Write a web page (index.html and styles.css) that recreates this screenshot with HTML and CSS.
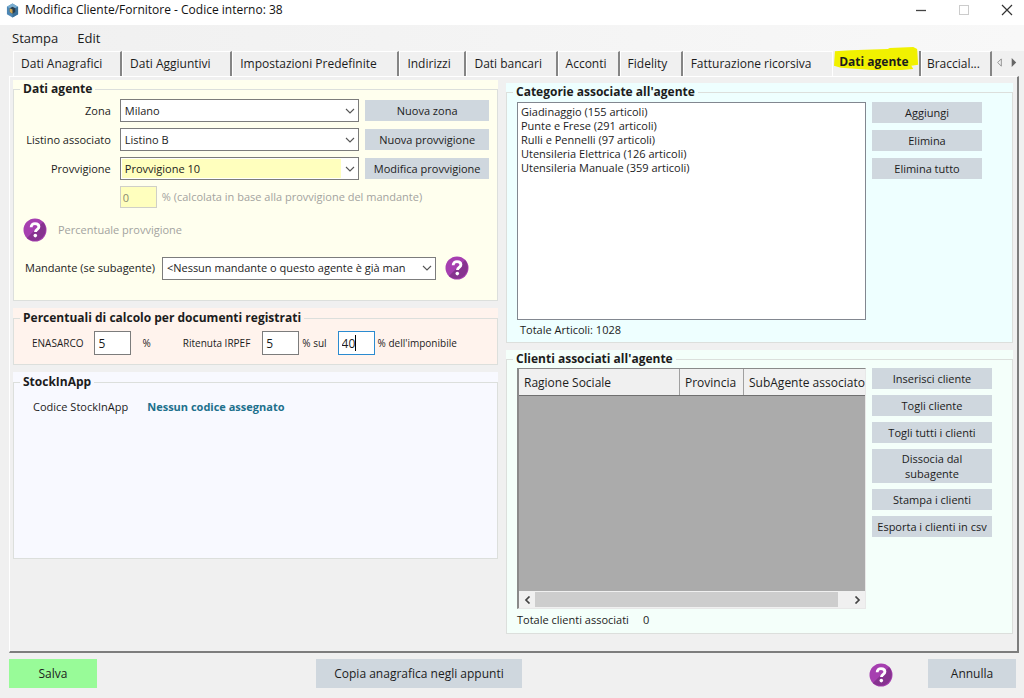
FILE: index.html
```html
<!DOCTYPE html>
<html lang="it">
<head>
<meta charset="utf-8">
<title>Modifica Cliente/Fornitore - Codice interno: 38</title>
<link rel="stylesheet" href="styles.css">
</head>
<body>
<svg class="defs" aria-hidden="true">
  <symbol id="help" viewBox="0 0 24 24">
    <circle cx="12" cy="12" r="11.5" fill="#a63fb0"/>
    <path d="M20.1 3.9A11.5 11.5 0 0 1 3.9 20.1z" fill="#86338f"/>
    <path d="M8.2 9.2C8.2 6.8 9.8 5.6 12 5.6s3.9 1.2 3.9 3.2c0 2.6-3.4 2.6-3.4 5.2" fill="none" stroke="#fff" stroke-width="2.9"/>
    <circle cx="12.3" cy="17.6" r="1.8" fill="#fff"/>
  </symbol>
  <symbol id="chevron" viewBox="0 0 10 6">
    <path d="M1 1l4 4 4-4" fill="none" stroke="#555" stroke-width="1.1"/>
  </symbol>
</svg>

<header class="titlebar">
  <svg class="app-icon" viewBox="0 0 14 16" aria-hidden="true">
    <path d="M7 0.5L13 4v8l-6 3.5L1 12V4z" fill="#4d87b5"/>
    <path d="M7 0.5L13 4 7 7 1 4z" fill="#79add0"/>
    <path d="M7 7l6-3v8l-6 3.5z" fill="#3a7099"/>
    <path d="M4 5.5l3-1.5 3 1.5v4L7 11.5 4 9.5z" fill="#283e50"/>
    <path d="M4 5.5l3 1.5v4.5L4 9.5z" fill="#d3a852"/>
  </svg>
  <h1 class="title">Modifica Cliente/Fornitore - Codice interno: 38</h1>
  <div class="window-buttons">
    <button class="window-button" aria-label="Riduci a icona"><svg viewBox="0 0 12 12"><path d="M1 6.500h10" stroke="#444" stroke-width="1.300"/></svg></button>
    <button class="window-button" aria-label="Ingrandisci" disabled><svg viewBox="0 0 12 12"><rect x="1.500" y="1.500" width="9" height="9" fill="none" stroke="#ccc"/></svg></button>
    <button class="window-button" aria-label="Chiudi"><svg viewBox="0 0 12 12"><path d="M1 1l10 10M11 1L1 11" stroke="#333" stroke-width="1.200"/></svg></button>
  </div>
</header>

<nav class="menubar">
  <button class="menu-item">Stampa</button>
  <button class="menu-item">Edit</button>
</nav>

<div class="tabs" role="tablist">
  <button class="tab" role="tab">Dati Anagrafici</button>
  <button class="tab" role="tab">Dati Aggiuntivi</button>
  <button class="tab" role="tab">Impostazioni Predefinite</button>
  <button class="tab" role="tab">Indirizzi</button>
  <button class="tab" role="tab">Dati bancari</button>
  <button class="tab" role="tab">Acconti</button>
  <button class="tab" role="tab">Fidelity</button>
  <button class="tab tab-before-selected" role="tab">Fatturazione ricorsiva</button>
  <button class="tab tab-selected" role="tab" aria-selected="true">
    <svg class="marker" viewBox="0 0 88 24" preserveAspectRatio="none" aria-hidden="true"><path d="M2 4L18 3 40 2.500 56 2 58 1 82 0 86 2 87 17 80 18 82 21 70 22 40 22 8 20 1 18z" fill="#f1f100"/></svg>
    <span class="tab-label">Dati agente</span>
  </button>
  <button class="tab" role="tab">Braccial...</button>
  <div class="tab-scroll">
    <button class="tab-arrow" aria-label="Schede precedenti"><svg viewBox="0 0 6 10"><path d="M5 1v8L1 5z" fill="#f4f4f4" stroke="#888"/></svg></button>
    <button class="tab-arrow" aria-label="Schede successive"><svg viewBox="0 0 6 10"><path d="M1 0v10l5-5z" fill="#666"/></svg></button>
  </div>
</div>

<main class="page">
  <div class="column column-left">
    <div class="group group-agent">
      <fieldset class="box">
        <legend>Dati agente</legend>
        <div class="agent-grid">
          <label for="zona">Zona</label>
          <span class="combo"><select id="zona"><option>Milano</option></select><svg><use href="#chevron"/></svg></span>
          <button class="button">Nuova zona</button>
          <label for="listino">Listino associato</label>
          <span class="combo"><select id="listino"><option>Listino B</option></select><svg><use href="#chevron"/></svg></span>
          <button class="button">Nuova provvigione</button>
          <label for="provvigione">Provvigione</label>
          <span class="combo combo-yellow"><select id="provvigione"><option>Provvigione 10</option></select><svg><use href="#chevron"/></svg></span>
          <button class="button">Modifica provvigione</button>
          <div class="percent-row">
            <input class="field field-disabled" id="calcolata" value="0" disabled>
            <label for="calcolata">% (calcolata in base alla provvigione del mandante)</label>
          </div>
        </div>
        <div class="help-row">
          <button class="help" aria-label="Aiuto provvigione"><svg><use href="#help"/></svg></button>
          <span>Percentuale provvigione</span>
        </div>
        <div class="mandante-row">
          <label for="mandante">Mandante (se subagente)</label>
          <span class="combo"><select id="mandante"><option>&lt;Nessun mandante o questo agente è già man</option></select><svg><use href="#chevron"/></svg></span>
          <button class="help" aria-label="Aiuto mandante"><svg><use href="#help"/></svg></button>
        </div>
      </fieldset>
    </div>

    <div class="group group-percent">
      <fieldset class="box">
        <legend>Percentuali di calcolo per documenti registrati</legend>
        <div class="tax-row">
          <div class="tax-item">
            <label for="enasarco">ENASARCO</label>
            <input class="field" id="enasarco" value="5">
            <span>%</span>
          </div>
          <div class="tax-item tax-irpef">
            <label for="irpef">Ritenuta IRPEF</label>
            <input class="field" id="irpef" value="5">
            <label class="tax-sul" for="imponibile">% sul</label>
            <span class="caret-field"><input class="field field-active" id="imponibile" value="40"></span>
            <span class="tax-end">% dell'imponibile</span>
          </div>
        </div>
      </fieldset>
    </div>

    <div class="group group-stock">
      <fieldset class="box">
        <legend>StockInApp</legend>
        <div class="stock-row">
          <span>Codice StockInApp</span>
          <strong>Nessun codice assegnato</strong>
        </div>
      </fieldset>
    </div>
  </div>

  <div class="column column-right">
    <div class="group group-categories">
      <fieldset class="box">
        <legend>Categorie associate all'agente</legend>
        <div class="side-layout">
          <div class="list-area">
            <select class="listbox" multiple size="15" aria-label="Categorie associate all'agente">
              <option>Giadinaggio (155 articoli)</option>
              <option>Punte e Frese (291 articoli)</option>
              <option>Rulli e Pennelli (97 articoli)</option>
              <option>Utensileria Elettrica (126 articoli)</option>
              <option>Utensileria Manuale (359 articoli)</option>
            </select>
            <p class="total total-articles">Totale Articoli: 1028</p>
          </div>
          <div class="side-buttons side-buttons-narrow">
            <button class="button">Aggiungi</button>
            <button class="button">Elimina</button>
            <button class="button">Elimina tutto</button>
          </div>
        </div>
      </fieldset>
    </div>

    <div class="group group-clients">
      <fieldset class="box">
        <legend>Clienti associati all'agente</legend>
        <div class="side-layout side-layout-clients">
          <div class="list-area">
            <div class="datagrid">
              <div class="datagrid-view">
                <table class="datagrid-table">
                  <thead><tr><th class="col-name">Ragione Sociale</th><th class="col-province">Provincia</th><th class="col-sub">SubAgente associato</th></tr></thead>
                </table>
              </div>
              <div class="scrollbar">
                <button class="scroll-arrow" aria-label="Scorri a sinistra"><svg viewBox="0 0 6 8"><path d="M5 0.500L1.500 4 5 7.500" fill="none" stroke="#444" stroke-width="1.700"/></svg></button>
                <div class="scroll-track"><div class="scroll-thumb"></div></div>
                <button class="scroll-arrow" aria-label="Scorri a destra"><svg viewBox="0 0 6 8"><path d="M1 0.500L4.500 4 1 7.500" fill="none" stroke="#444" stroke-width="1.700"/></svg></button>
              </div>
            </div>
            <p class="total"><span>Totale clienti associati</span><span>0</span></p>
          </div>
          <div class="side-buttons">
            <button class="button">Inserisci cliente</button>
            <button class="button">Togli cliente</button>
            <button class="button">Togli tutti i clienti</button>
            <button class="button button-tall">Dissocia dal subagente</button>
            <button class="button">Stampa i clienti</button>
            <button class="button">Esporta i clienti in csv</button>
          </div>
        </div>
      </fieldset>
    </div>
  </div>
</main>

<footer class="footer">
  <button class="button button-large button-save">Salva</button>
  <button class="button button-large button-copy">Copia anagrafica negli appunti</button>
  <button class="help" aria-label="Aiuto"><svg><use href="#help"/></svg></button>
  <button class="button button-large">Annulla</button>
</footer>
</body>
</html>
```
FILE: styles.css
```css
* { box-sizing: border-box; }

body {
  margin: 0;
  min-height: 100vh;
  display: flex;
  flex-direction: column;
  background: #f0f0f0;
  color: #1c1c1c;
  font: 11px/14px "Open Sans", "Noto Sans", sans-serif;
}

button, input, select { font: inherit; color: inherit; margin: 0; }
button { border: 0; padding: 0; background: none; }
p { margin: 0; }
.defs { position: absolute; width: 0; height: 0; }

.titlebar { display: flex; align-items: center; height: 25px; padding: 0 5px 5px 6px; background: #fff; }
.app-icon { width: 13px; height: 15px; }
.title { flex: 1; margin: 0 0 0 6px; font-size: 12px; font-weight: 400; color: #111; }
.window-buttons { display: flex; gap: 19px; }
.window-button { display: flex; justify-content: center; width: 24px; }
.window-button svg { width: 12px; height: 12px; }

.menubar {
  display: flex;
  gap: 19px;
  height: 26px;
  padding: 0 12px;
  background: linear-gradient(90deg, #f0f0f0, #f8f8f8);
  font-size: 13px;
}

.tabs {
  display: grid;
  grid-template-columns: 109fr 110fr 167fr 67fr 91fr 62fr 63fr 149fr 89fr 71fr 32px;
  height: 25px;
  padding-left: 13px;
  font-size: 12px;
}
.tab {
  border: 1px solid #fff;
  border-right: 2px solid #858585;
  border-bottom: 0;
  padding-left: 7px;
  text-align: left;
  white-space: nowrap;
}
.tab:nth-child(10) { padding-left: 5px; }
.tab-before-selected { border-right: 0; }
.tab-selected { position: relative; padding: 0 4px 4px 0; text-align: center; font-weight: 700; border-top: 0; }
.marker { position: absolute; left: 0; top: -4px; width: 100%; height: 25px; }
.tab-label { position: relative; }
.tab-scroll { display: flex; gap: 7px; align-items: center; padding: 0 0 3px 4px; }
.tab-arrow { display: flex; }
.tab-arrow svg { width: 7px; height: 9px; }

.page {
  flex: 1;
  display: grid;
  grid-template-columns: 485fr 507fr;
  gap: 8px;
  margin: 0 5px 0 9px;
  padding: 3px 4px 17px 3px;
  border: 1px solid #fff;
  border-right: 2px solid #7d7d7d;
  border-bottom: 2px solid #7d7d7d;
}
.column { display: flex; flex-direction: column; gap: 7px; min-width: 0; }
.column-right { padding-top: 3px; }

.group { display: flex; }
.box { flex: 1; min-width: 0; margin: 0; padding: 0; border: 1px solid #dcdfdc; }
.box legend { margin-left: 6px; padding: 0 3px; font-size: 12px; line-height: 18px; font-weight: 700; color: #1c1c1c; }
.group-percent legend, .group-stock legend { line-height: 20px; }
.group-agent { background: #ffffee; }
.group-percent { background: #fff3ed; }
.group-stock { background: #f8f9ff; min-height: 187px; }
.group-categories { background: #eeffff; }
.group-clients { background: #f4fffa; flex: 1; }

.button { height: 21px; background: #cfd7de; text-align: center; white-space: nowrap; }
.help { width: 24px; height: 24px; display: flex; }
.help svg { width: 24px; height: 24px; }

.combo { display: grid; align-items: center; }
.combo select, .combo svg { grid-area: 1 / 1; }
.combo select {
  appearance: none;
  width: 100%;
  height: 23px;
  padding: 0 20px 0 4px;
  border: 1px solid #7c7c7c;
  border-radius: 0;
  background: #fff;
}
.combo svg { width: 10px; height: 6px; justify-self: end; margin-right: 4px; pointer-events: none; }
.combo-yellow select { background: linear-gradient(90deg, #ffffbe calc(100% - 17px), #fff 0); box-shadow: inset 0 0 0 1px #fff; }

.field { width: 37px; height: 24px; padding: 0 3px; border: 1px solid #7c7c7c; background: #fff; font-size: 12px; }
.field-disabled { height: 22px; padding: 0 2px; border-color: #d0d0c8; background: #ffffbe; color: #8a8a70; font-size: 11px; }
.field-active { border-color: #2b8bd0; }

.agent-grid {
  display: grid;
  grid-template-columns: 100fr 240fr 124fr;
  gap: 6px;
  align-items: center;
  padding: 1px 8px 0 0;
}
.agent-grid > label { text-align: right; padding-right: 3px; }
.percent-row { grid-column: 2 / 4; display: flex; align-items: center; gap: 5px; color: #a3a3a0; white-space: nowrap; }
.help-row { display: flex; align-items: center; gap: 11px; padding: 10px 0 14px 9px; color: #a3a3a0; }
.mandante-row { display: flex; align-items: center; gap: 7px; padding: 0 0 20px 11px; white-space: nowrap; }
.mandante-row .combo { width: 274px; }
.mandante-row .help { margin-left: 2px; }

.tax-row { display: flex; gap: 32px; padding: 3px 0 9px 18px; white-space: nowrap; font-size: 10px; }
.tax-item { display: flex; align-items: center; gap: 11px; }
.tax-irpef { gap: 3px; }
.tax-irpef label:first-child { margin-right: 9px; }
.tax-sul { margin-right: 8px; }
.caret-field { position: relative; }
.caret-field::after { content: ""; position: absolute; left: 17px; top: 4px; width: 1px; height: 16px; background: #000; }

.stock-row { display: flex; gap: 19px; padding: 8px 0 0 19px; }
.stock-row strong { color: #20708c; font-weight: 700; }

.side-layout { display: flex; gap: 6px; padding: 1px 20px 0 10px; height: 100%; }
.side-layout-clients { padding-top: 0; }
.list-area { flex: 1; min-width: 0; display: flex; flex-direction: column; }
.side-buttons { width: 120px; display: flex; flex-direction: column; gap: 6px; }
.side-buttons-narrow { width: 110px; margin-right: 10px; gap: 7px; }
.button-tall { height: 34px; padding: 0 24px; line-height: 15px; white-space: normal; }
.listbox { width: 100%; height: 218px; padding: 1px; border: 1px solid #828790; border-radius: 0; background: #fff; overflow: hidden; }
.listbox option { height: 14px; min-height: 0; padding: 0 2px; }
.total { display: flex; gap: 14px; padding: 4px 0; }
.total-articles { padding: 3px 3px 5px; }

.datagrid { height: 241px; display: flex; flex-direction: column; border: 1px solid #8a8a8a; border-left-width: 2px; border-right: 1px solid #e8e8e8; border-bottom-color: #e8e8e8; background: #ababab; }
.datagrid-view { flex: 1; overflow: hidden; }
.datagrid-table { width: 370px; table-layout: fixed; border-collapse: separate; border-spacing: 0; border-bottom: 1px solid #707070; background: #f0f0f0; font-size: 12px; }
.datagrid-table th { height: 26px; padding: 1px 0 0 5px; border-right: 1px solid #a0a0a0; text-align: left; font-weight: 400; white-space: nowrap; }
.col-name { width: 161px; }
.col-province { width: 64px; }
.scrollbar { display: flex; height: 17px; background: #f0f0f0; }
.scroll-arrow { width: 16px; display: flex; align-items: center; justify-content: center; }
.scroll-arrow svg { width: 7px; height: 8px; }
.scroll-track { flex: 1; padding: 1px 11px 1px 0; }
.scroll-thumb { height: 15px; background: #cdcdcd; }

.footer { display: flex; align-items: center; padding: 6px 8px 10px 9px; font-size: 12px; }
.button-large { width: 88px; height: 29px; }
.button-save { background: #98fb98; }
.button-copy { width: 206px; margin-left: 219px; }
.footer .help { margin: 3px 35px 0 auto; }
```
